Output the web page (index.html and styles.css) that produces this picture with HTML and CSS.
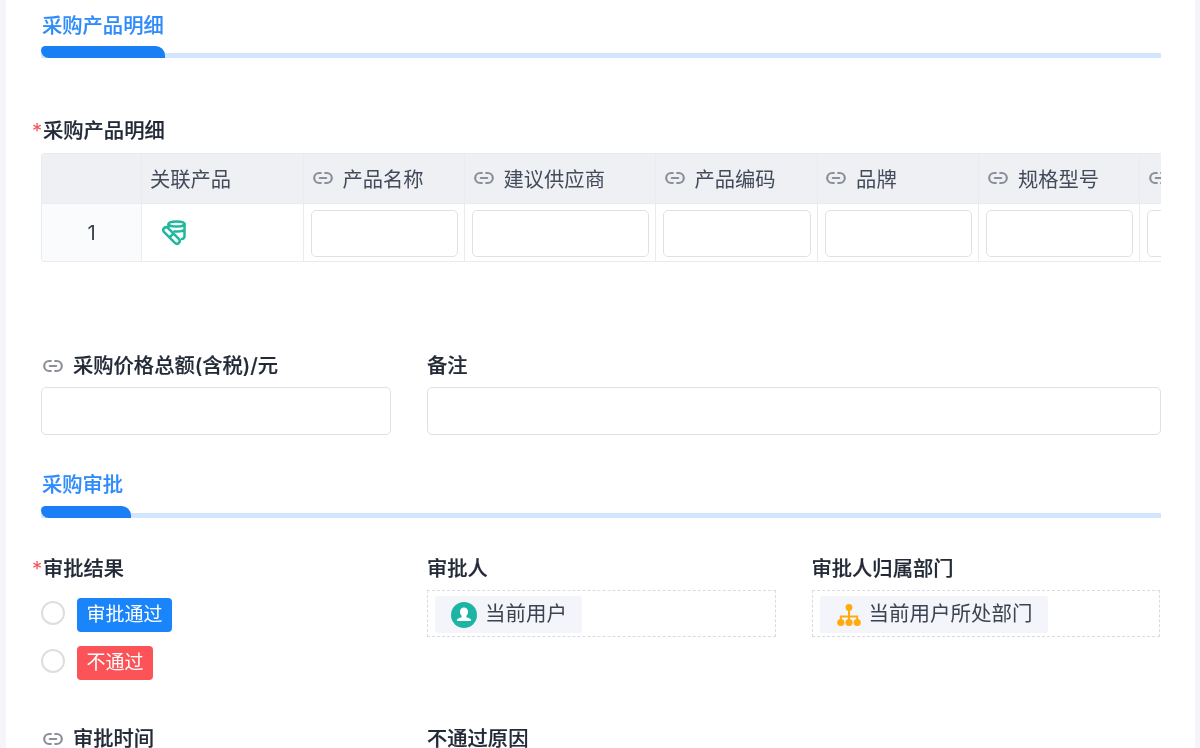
FILE: index.html
```html
<!DOCTYPE html>
<html lang="zh-CN">
<head>
<meta charset="utf-8">
<title>采购产品明细</title>
<link rel="stylesheet" href="styles.css">
</head>
<body>
<svg class="defs" width="0" height="0" aria-hidden="true">
  <symbol id="link" viewBox="0 0 20 14">
    <path d="M7.800 2H6.200a5 5 0 0 0 0 10h1.600M12.200 2h1.600a5 5 0 0 1 0 10h-1.600M6.800 7h6.400" fill="none" stroke="currentColor" stroke-width="2.200" stroke-linecap="round"/>
  </symbol>
</svg>
<main class="panel">
  <section class="section-head">
    <h2 class="section-title">采购产品明细</h2>
    <div class="track"><div class="track-fill track-fill-wide"></div></div>
  </section>

  <div class="field-label label-table"><span class="star">*</span>采购产品明细</div>
  <div class="table-wrap">
    <div class="table">
      <div class="th"></div>
      <div class="th th-plain">关联产品</div>
      <div class="th"><svg class="link"><use href="#link"/></svg>产品名称</div>
      <div class="th"><svg class="link"><use href="#link"/></svg>建议供应商</div>
      <div class="th"><svg class="link"><use href="#link"/></svg>产品编码</div>
      <div class="th"><svg class="link"><use href="#link"/></svg>品牌</div>
      <div class="th"><svg class="link"><use href="#link"/></svg>规格型号</div>
      <div class="th"><svg class="link"><use href="#link"/></svg></div>

      <div class="td td-index">1</div>
      <div class="td td-icon">
        <svg class="product-icon" viewBox="0 0 25 27" fill="none" stroke="#1fb89e" stroke-width="2.500" stroke-linecap="round" stroke-linejoin="round">
          <ellipse cx="15.500" cy="4" rx="8" ry="2.600"/>
          <path d="M7.500 4.500V7M23.500 4v12.500c0 1.300-1 2.100-2.500 2.500M23.500 9c0 1.400-2.800 2.600-8 2.600-.8 0-1.500 0-2.200-.1"/>
          <path d="M7.070 8.120l11 11a2.800 2.800 0 0 1-4.140 3.760l-11-11a2.800 2.800 0 0 1 4.140-3.760zM12.570 13.620l-4.140 3.760"/>
        </svg>
      </div>
      <div class="td"><div class="input"></div></div>
      <div class="td"><div class="input"></div></div>
      <div class="td"><div class="input"></div></div>
      <div class="td"><div class="input"></div></div>
      <div class="td"><div class="input"></div></div>
      <div class="td"><div class="input"></div></div>
    </div>
  </div>

  <div class="form-grid grid-price">
    <div class="field">
      <div class="field-label"><svg class="link link-label"><use href="#link"/></svg>采购价格总额(含税)/元</div>
      <div class="input input-full"></div>
    </div>
    <div class="field">
      <div class="field-label">备注</div>
      <div class="input input-full"></div>
    </div>
  </div>

  <section class="section-head section-second">
    <h2 class="section-title">采购审批</h2>
    <div class="track track-second"><div class="track-fill track-fill-narrow"></div></div>
  </section>

  <div class="form-grid grid-approve">
    <div class="field">
      <div class="field-label label-required"><span class="star">*</span>审批结果</div>
      <div class="radios">
        <div class="radio-row"><span class="radio"></span><span class="tag tag-blue">审批通过</span></div>
        <div class="radio-row"><span class="radio"></span><span class="tag tag-red">不通过</span></div>
      </div>
    </div>
    <div class="field">
      <div class="field-label">审批人</div>
      <div class="dashed">
        <div class="chip">
          <svg class="chip-icon" viewBox="0 0 26 26">
            <circle cx="13" cy="13" r="13" fill="#1cb5a3"/>
            <path d="M13 5.500c2.500 0 4 1.900 4 4.300 0 1.700-.7 3.100-1.600 4v1.300c0 .6 3.400 1 4.300 2.100.4.500.3 1.800.3 1.800H6s-.1-1.300.3-1.800c.9-1.100 4.300-1.500 4.300-2.100v-1.300c-.9-.9-1.600-2.300-1.600-4 0-2.400 1.500-4.300 4-4.300z" fill="#fff"/>
          </svg>
          <span class="chip-text">当前用户</span>
        </div>
      </div>
    </div>
    <div class="field">
      <div class="field-label">审批人归属部门</div>
      <div class="dashed">
        <div class="chip">
          <svg class="chip-icon chip-icon-org" viewBox="0 0 24 24">
            <g fill="#ffab0f">
              <circle cx="12" cy="4.500" r="3.400"/>
              <circle cx="3.800" cy="19.500" r="3.600"/>
              <circle cx="12" cy="19.500" r="3.600"/>
              <circle cx="20.200" cy="19.500" r="3.600"/>
            </g>
            <path d="M12 6v12M3.800 18v-4.500h16.400v4.500" fill="none" stroke="#ffab0f" stroke-width="2"/>
          </svg>
          <span class="chip-text">当前用户所处部门</span>
        </div>
      </div>
    </div>
  </div>

  <div class="form-grid grid-bottom">
    <div class="field-label"><svg class="link link-label"><use href="#link"/></svg>审批时间</div>
    <div class="field-label">不通过原因</div>
  </div>
</main>
</body>
</html>
```

FILE: styles.css
```css
* { box-sizing: border-box; }
html, body { margin: 0; height: 748px; overflow: hidden; }
body {
  background: #f4f5f8;
  font-family: Inter, "Noto Sans CJK SC", "Noto Sans", sans-serif;
  font-size: 20.3px;
  color: #2b3240;
}
.defs { display: block; height: 0; }
.panel {
  margin: 0 5px 0 6px;
  height: 748px;
  padding: 12px 34px 0 35px;
  background: #fff;
  overflow: hidden;
  filter: blur(.4px);
}
.section-title {
  margin: 0;
  font-size: 20.3px;
  font-weight: 500;
  line-height: 28px;
  color: #2e8bfb;
  padding-left: 1px;
  -webkit-text-stroke: .15px #2e8bfb;
}
.track {
  margin-top: 6px;
  height: 12px;
  display: flex;
  align-items: flex-end;
  background: linear-gradient(#fff 7px, #d4e6fd 7px);
}
.track-second { margin-top: 7px; }
.track-fill {
  height: 12px;
  background: #1a7ff5;
  border-radius: 5px 11px 0 9px;
}
.track-fill-wide { width: 124px; }
.track-fill-narrow { width: 90px; }
.field-label {
  display: flex;
  align-items: center;
  line-height: 28px;
  height: 28px;
  font-weight: 500;
  font-size: 20.3px;
  color: #232a37;
  white-space: nowrap;
  -webkit-text-stroke: .2px #232a37;
}
.label-table, .label-required { padding-left: 2px; }
.label-table { margin-top: 59px; }
.star {
  color: #f5535a;
  font-weight: 400;
  margin-left: -11px;
  width: 11px;
  display: inline-block;
  -webkit-text-stroke: 0;
}
.table-wrap {
  margin-top: 8px;
  height: 109px;
  overflow: hidden;
  border: 1px solid #e9ebef;
  border-right: 0;
  border-radius: 4px 0 0 4px;
}
.table {
  display: grid;
  grid-template-columns: 100px 162px 161px 191px 161.600px 161.800px 161px 161px;
  grid-template-rows: 50px 57px;
  width: 1260px;
}
.th, .td { border-right: 1px solid #e9ebef; }
.th {
  display: flex;
  align-items: center;
  padding: 0 0 2px 8.500px;
  background: #eef0f4;
  border-bottom: 1px solid #e9ebef;
  color: #434a5a;
  white-space: nowrap;
}
.th-plain { padding-left: 8px; }
.td { padding: 6px 6px 0 7px; }
.td-index {
  background: #fafbfc;
  display: flex;
  align-items: center;
  justify-content: center;
  padding: 0;
  color: #3a404c;
}
.td-icon { display: flex; align-items: center; padding: 1px 0 0 19px; }
.product-icon { width: 25px; height: 27px; }
.link {
  width: 20px;
  height: 14px;
  color: #8a8f99;
  margin-right: 10px;
  flex: none;
}
.link-label { margin: 0 10px 0 2px; }
.input {
  height: 47px;
  width: 100%;
  background: #fff;
  border: 1px solid #dfe1e6;
  border-radius: 5px;
}
.input-full { height: 48px; margin-top: 7px; }
.form-grid {
  display: grid;
  grid-template-columns: 350px 348.500px 348.500px;
  column-gap: 36px;
  align-items: start;
}
.grid-price { margin-top: 90px; grid-template-columns: 350px 1fr; }
.section-second { margin-top: 36px; }
.grid-approve { margin-top: 37px; }
.grid-bottom { margin-top: 45px; }
.radios {
  display: flex;
  flex-direction: column;
  gap: 14px;
  margin-top: 15px;
}
.radio-row { display: flex; align-items: center; gap: 12px; }
.radio {
  width: 24px;
  height: 24px;
  border: 2px solid #dcdee1;
  border-radius: 50%;
  margin-top: -5px;
  background: #fff;
}
.tag {
  height: 34px;
  line-height: 33px;
  padding: 0 9.500px;
  border-radius: 4px;
  color: #fff;
  font-size: 19px;
}
.tag-blue { background: #1a84fb; }
.tag-red { background: #fb5358; }
.dashed {
  margin-top: 7px;
  height: 47px;
  border: 1px dashed #d8dbe0;
  padding: 5px 7px;
}
.chip {
  display: inline-flex;
  align-items: center;
  height: 37px;
  padding: 0 15px 0 16px;
  background: #f3f5fa;
  border-radius: 3px;
  color: #3c4350;
}
.chip-text { font-size: 20.500px; line-height: 26px; margin-top: -1px; }
.chip-icon { width: 26px; height: 26px; margin-right: 8px; }
.chip-icon-org { width: 24px; height: 24px; margin: 0 8px 0 1px; }
```
